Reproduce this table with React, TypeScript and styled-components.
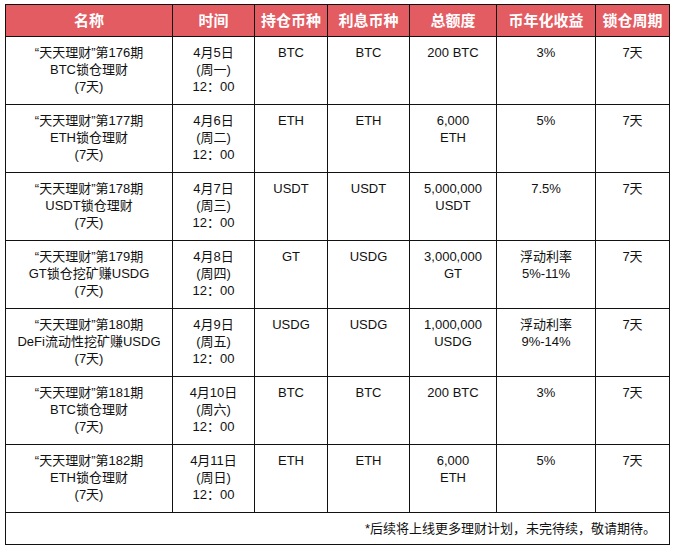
import styled, { createGlobalStyle } from 'styled-components';

const GlobalStyle = createGlobalStyle`
  html, body {
    margin: 0;
    padding: 0;
    background: #fff;
  }
  body {
    font-family: "Liberation Sans", "Noto Sans CJK SC", sans-serif;
    color: #111;
  }
`;

const Page = styled.div`
  padding: 4px 0 0 5px;
`;

const Table = styled.table`
  border-collapse: collapse;
  table-layout: fixed;
  width: 665px;
  font-size: 13px;
  line-height: 17px;

  td, th {
    border: 1px solid #111;
    text-align: center;
    padding: 0;
  }
`;

const Col = styled.col<{ $w: number }>`
  width: ${(p) => p.$w}px;
`;

const HeadCell = styled.th`
  height: 31px;
  background: #e35c62;
  color: #fff;
  font-size: 15px;
  font-weight: 700;
  vertical-align: middle;
`;

const Cell = styled.td`
  height: 68px;
  vertical-align: top;
  padding-top: 7px !important;
  box-sizing: border-box;
`;

const Line = styled.div`
  white-space: nowrap;
`;

const FootCell = styled.td`
  height: 31px;
  text-align: right !important;
  padding-right: 13px !important;
  vertical-align: middle;
`;

type Product = {
  no: number;
  title: string;
  date: string;
  week: string;
  hold: string;
  pay: string;
  total: string[];
  rate: string[];
};

const columns: [string, number][] = [
  ['名称', 167],
  ['时间', 82],
  ['持仓币种', 73],
  ['利息币种', 82],
  ['总额度', 87],
  ['币年化收益', 99],
  ['锁仓周期', 74],
];

const products: Product[] = [
  { no: 176, title: 'BTC锁仓理财', date: '4月5日', week: '(周一)', hold: 'BTC', pay: 'BTC', total: ['200 BTC'], rate: ['3%'] },
  { no: 177, title: 'ETH锁仓理财', date: '4月6日', week: '(周二)', hold: 'ETH', pay: 'ETH', total: ['6,000', 'ETH'], rate: ['5%'] },
  { no: 178, title: 'USDT锁仓理财', date: '4月7日', week: '(周三)', hold: 'USDT', pay: 'USDT', total: ['5,000,000', 'USDT'], rate: ['7.5%'] },
  { no: 179, title: 'GT锁仓挖矿赚USDG', date: '4月8日', week: '(周四)', hold: 'GT', pay: 'USDG', total: ['3,000,000', 'GT'], rate: ['浮动利率', '5%-11%'] },
  { no: 180, title: 'DeFi流动性挖矿赚USDG', date: '4月9日', week: '(周五)', hold: 'USDG', pay: 'USDG', total: ['1,000,000', 'USDG'], rate: ['浮动利率', '9%-14%'] },
  { no: 181, title: 'BTC锁仓理财', date: '4月10日', week: '(周六)', hold: 'BTC', pay: 'BTC', total: ['200 BTC'], rate: ['3%'] },
  { no: 182, title: 'ETH锁仓理财', date: '4月11日', week: '(周日)', hold: 'ETH', pay: 'ETH', total: ['6,000', 'ETH'], rate: ['5%'] },
];

const App = () => {
  return (
    <Page>
      <GlobalStyle />
      <Table>
        <colgroup>
          {columns.map(([name, w]) => (
            <Col key={name} $w={w} />
          ))}
        </colgroup>
        <thead>
          <tr>
            {columns.map(([name]) => (
              <HeadCell key={name}>{name}</HeadCell>
            ))}
          </tr>
        </thead>
        <tbody>
          {products.map((p) => (
            <tr key={p.no}>
              <Cell>
                <Line>“天天理财”第{p.no}期</Line>
                <Line>{p.title}</Line>
                <Line>(7天)</Line>
              </Cell>
              <Cell>
                <Line>{p.date}</Line>
                <Line>{p.week}</Line>
                <Line>12：00</Line>
              </Cell>
              <Cell>{p.hold}</Cell>
              <Cell>{p.pay}</Cell>
              <Cell>
                {p.total.map((t) => (
                  <Line key={t}>{t}</Line>
                ))}
              </Cell>
              <Cell>
                {p.rate.map((r) => (
                  <Line key={r}>{r}</Line>
                ))}
              </Cell>
              <Cell>7天</Cell>
            </tr>
          ))}
          <tr>
            <FootCell colSpan={7}>*后续将上线更多理财计划，未完待续，敬请期待。</FootCell>
          </tr>
        </tbody>
      </Table>
    </Page>
  );
};

export default App;
